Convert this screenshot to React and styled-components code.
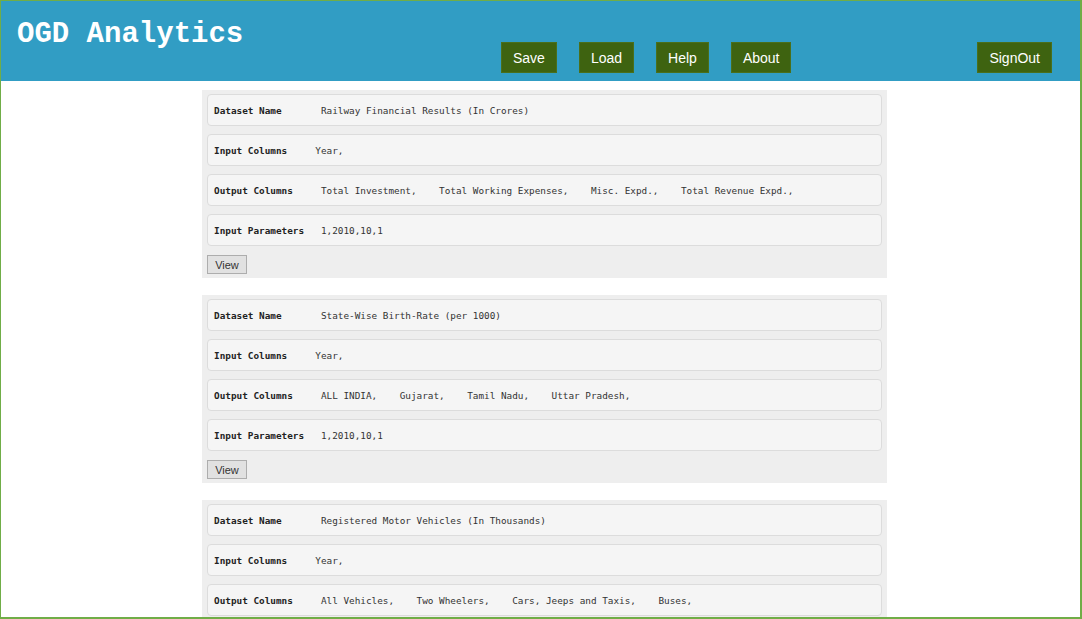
import React from 'react';
import styled, { createGlobalStyle } from 'styled-components';

const GlobalStyle = createGlobalStyle`
  html, body {
    margin: 0;
    padding: 0;
    background: #ffffff;
  }
`;

const Frame = styled.div`
  box-sizing: border-box;
  height: 619px;
  overflow: hidden;
  border-style: solid;
  border-color: #70ad47;
  border-width: 1px 2px 2px 1px;
  background: #ffffff;
`;

const Header = styled.header`
  height: 80px;
  background: #319dc4;
  display: flex;
  align-items: flex-start;
  padding: 0 28px 0 16px;
`;

const Title = styled.h1`
  flex: 0 0 484px;
  margin: 19px 0 0;
  font-family: "Liberation Mono", "Courier New", monospace;
  font-weight: bold;
  font-size: 29px;
  line-height: 29px;
  color: #ffffff;
`;

const Nav = styled.nav`
  display: flex;
  gap: 22px;
  margin-top: 41px;
`;

const NavButton = styled.button`
  box-sizing: border-box;
  height: 31px;
  padding: 0 11px;
  border: 1px solid #4a6f1b;
  background: #3e6310;
  color: #ffffff;
  font-family: "Liberation Sans", Arial, sans-serif;
  font-size: 14px;
  cursor: pointer;
`;

const SignOutButton = styled(NavButton)`
  margin-left: auto;
  margin-top: 41px;
`;

const Content = styled.main`
  padding-top: 9px;
`;

const Panel = styled.section`
  box-sizing: border-box;
  width: 685px;
  margin: 0 0 17px 201px;
  padding: 4px 5px 4px;
  background: #eeeeee;
  display: flex;
  flex-direction: column;
  gap: 8px;
`;

const Row = styled.div`
  box-sizing: border-box;
  height: 32px;
  padding: 0 6px;
  background: #f5f5f5;
  border: 1px solid #dcdcdc;
  border-radius: 4px;
  display: flex;
  align-items: center;
  font-family: "DejaVu Sans Mono", "Liberation Mono", monospace;
  font-size: 9.35px;
  color: #333333;
  white-space: pre;
`;

const Label = styled.span`
  font-weight: bold;
  color: #222222;
  width: ${p => p.ch}ch;
  flex-shrink: 0;
`;

const Value = styled.span``;

const ViewButton = styled.button`
  box-sizing: border-box;
  align-self: flex-start;
  height: 19px;
  width: 40px;
  margin-top: 1px;
  padding: 0;
  background: #e1e1e1;
  border: 1px solid #adadad;
  color: #333333;
  font-family: "Liberation Sans", Arial, sans-serif;
  font-size: 11px;
  cursor: pointer;
`;

const datasets = [
  {
    name: 'Railway Financial Results (In Crores)',
    inputs: 'Year,',
    outputs: ['Total Investment,', 'Total Working Expenses,', 'Misc. Expd.,', 'Total Revenue Expd.,'],
    params: '1,2010,10,1'
  },
  {
    name: 'State-Wise Birth-Rate (per 1000)',
    inputs: 'Year,',
    outputs: ['ALL INDIA,', 'Gujarat,', 'Tamil Nadu,', 'Uttar Pradesh,'],
    params: '1,2010,10,1'
  },
  {
    name: 'Registered Motor Vehicles (In Thousands)',
    inputs: 'Year,',
    outputs: ['All Vehicles,', 'Two Wheelers,', 'Cars, Jeeps and Taxis,', 'Buses,'],
    params: '1,2010,10,1'
  }
];

const App = () => (
  <>
    <GlobalStyle />
    <Frame>
      <Header>
        <Title>OGD Analytics</Title>
        <Nav>
          <NavButton>Save</NavButton>
          <NavButton>Load</NavButton>
          <NavButton>Help</NavButton>
          <NavButton>About</NavButton>
        </Nav>
        <SignOutButton>SignOut</SignOutButton>
      </Header>
      <Content>
        {datasets.map((d, i) => (
          <Panel key={i}>
            <Row>
              <Label ch={19}>Dataset Name</Label>
              <Value>{d.name}</Value>
            </Row>
            <Row>
              <Label ch={18}>Input Columns</Label>
              <Value>{d.inputs}</Value>
            </Row>
            <Row>
              <Label ch={19}>Output Columns</Label>
              <Value>{d.outputs.join('    ')}</Value>
            </Row>
            <Row>
              <Label ch={19}>Input Parameters</Label>
              <Value>{d.params}</Value>
            </Row>
            <ViewButton>View</ViewButton>
          </Panel>
        ))}
      </Content>
    </Frame>
  </>
);

export default App;
